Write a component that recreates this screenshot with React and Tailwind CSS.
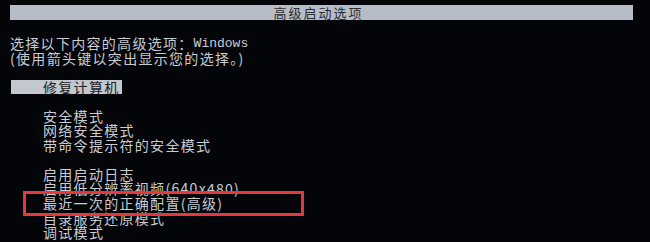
export default function App() {
  const safeModes = ["安全模式", "网络安全模式", "带命令提示符的安全模式"];
  const otherModes = [
    "启用启动日志",
    "启用低分辨率视频(640x480)",
    "最近一次的正确配置(高级)",
    "目录服务还原模式",
    "调试模式",
  ];

  return (
    <div
      className="relative w-[650px] h-[242px] overflow-hidden bg-[#040508] text-[#c9cdd2]"
      style={{ fontFamily: '"Noto Sans CJK SC", "Noto Sans", sans-serif' }}
    >
      {/* title bar */}
      <div className="mt-[5px] ml-[10px] w-[623px] h-[15px] bg-[#b7bdc7] flex items-center justify-center text-[13px] leading-none tracking-[2px] text-[#2a2c30] pr-[6px]">
        高级启动选项
      </div>

      <div className="mt-[16px] pl-[10px] text-[14px] leading-[14.55px] tracking-[1.3px]">
        <div className="h-[14.55px] flex items-center whitespace-nowrap">
          选择以下内容的高级选项：
          <span className="font-[Liberation_Mono] text-[13px] leading-none tracking-normal">
            Windows
          </span>
        </div>
        <div className="h-[14.55px] whitespace-nowrap">(使用箭头键以突出显示您的选择。)</div>
        <div className="h-[14.55px]" />

        <div className="h-[14.55px] flex">
          <div className="ml-[1px] pl-[32px] pr-[2px] bg-[#c3c8d0] text-[#1e2024]">
            修复计算机
          </div>
        </div>
        <div className="h-[14.55px]" />

        <div className="pl-[33px]">
          {safeModes.map((m) => (
            <div key={m} className="h-[14.55px] whitespace-nowrap">
              {m}
            </div>
          ))}
          <div className="h-[14.55px]" />
          {otherModes.map((m) => (
            <div key={m} className="h-[14.55px] whitespace-nowrap">
              {m}
            </div>
          ))}
        </div>
      </div>

      {/* annotation box */}
      <div className="absolute left-[23px] top-[191px] w-[281px] h-[25px] border-[3px] border-[#e3393b]" />
    </div>
  );
}
